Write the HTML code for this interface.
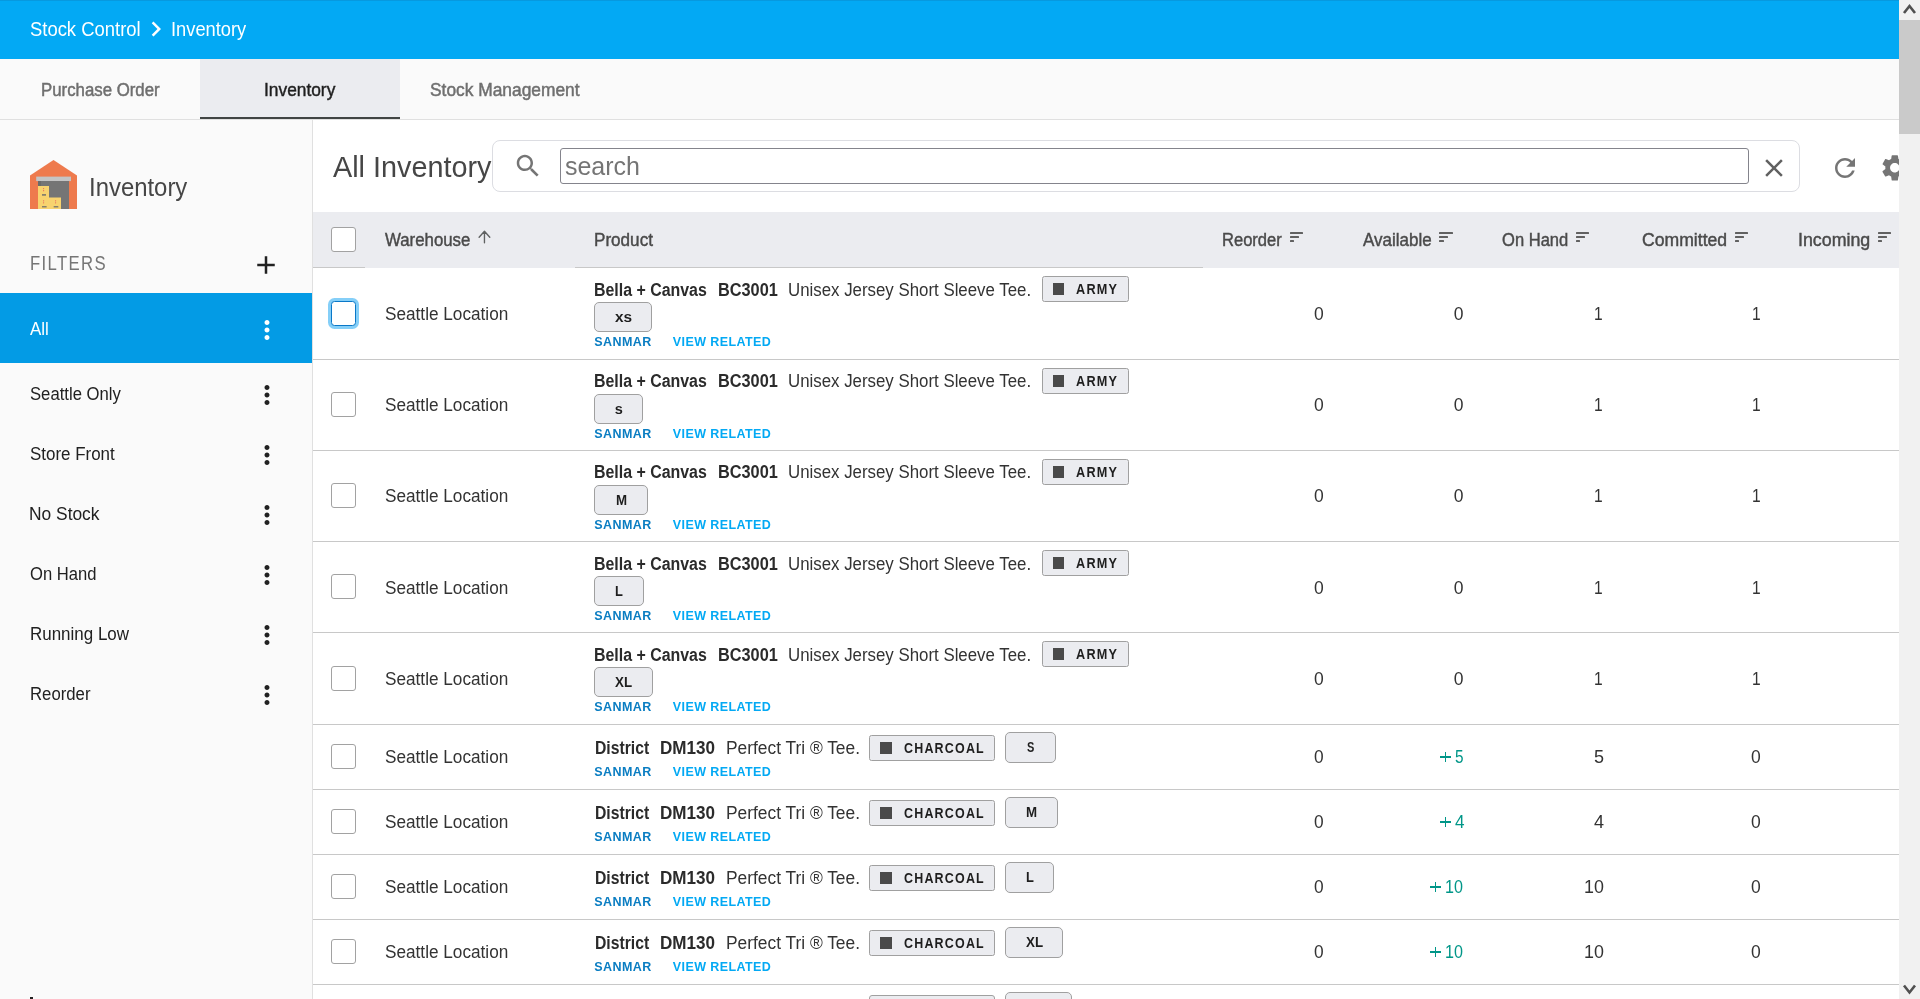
<!DOCTYPE html>
<html><head><meta charset="utf-8"><title>Inventory</title>
<style>
html,body{margin:0;padding:0;width:1920px;height:999px;overflow:hidden;background:#fff}
body{position:relative;font-family:'Liberation Sans', sans-serif}
svg{display:block}
</style></head><body>
<div id="root" style="position:absolute;left:0;top:0;width:1920px;height:999px;will-change:transform">
<div style="position:absolute;left:0px;top:0px;width:1899px;height:59px;background:#03A9F4"></div>
<div style="position:absolute;left:0px;top:0px;width:1899px;height:1px;background:#0A8FD0;opacity:.6"></div>
<svg style="position:absolute;left:141.2px;top:14.4px" width="30" height="30" viewBox="0 0 24 24"><path fill="#fff" d="M10 6L8.59 7.41 13.17 12l-4.58 4.59L10 18l6-6z"/></svg>
<div style="position:absolute;left:0px;top:59px;width:1899px;height:60px;background:#FAFAFA"></div>
<div style="position:absolute;left:200px;top:59px;width:200px;height:58px;background:#EBECF0"></div>
<div style="position:absolute;left:200px;top:117px;width:200px;height:2px;background:#404444"></div>
<div style="position:absolute;left:0px;top:119px;width:1899px;height:1px;background:#E0E0E0"></div>
<div style="position:absolute;left:0px;top:120px;width:312px;height:879px;background:#FAFAFA"></div>
<div style="position:absolute;left:312px;top:120px;width:1px;height:879px;background:#E0E0E0"></div>
<svg style="position:absolute;left:30px;top:160px" width="47" height="49" viewBox="0 0 47 49">
<path fill="#EE7A4D" d="M0 15.4 L23.5 0 L47 15.4 L47 49 L0 49 Z"/>
<rect x="6.2" y="16.6" width="34.8" height="4.5" fill="#C4C4C4"/>
<rect x="8" y="21" width="31" height="28" fill="#757575"/>
<rect x="8" y="26" width="11" height="23" fill="#F8D36F"/>
<rect x="8" y="37.5" width="23" height="11.5" fill="#F8D36F"/>
<rect x="12" y="34.2" width="4" height="1.4" fill="#6B6B6B"/><rect x="8" y="21" width="3" height="5" fill="#6A6A6A"/>
<rect x="12" y="46.2" width="4.6" height="1.2" fill="#6B6B6B"/>
<rect x="23.7" y="46.2" width="4.6" height="1.2" fill="#6B6B6B"/>
<circle cx="13.6" cy="28.6" r=".6" fill="#E86A5A"/><circle cx="13.6" cy="30.7" r=".6" fill="#E86A5A"/>
<circle cx="13.6" cy="40.8" r=".6" fill="#E86A5A"/><circle cx="13.6" cy="42.8" r=".6" fill="#E86A5A"/>
<circle cx="25.6" cy="40.8" r=".6" fill="#E86A5A"/><circle cx="25.6" cy="42.8" r=".6" fill="#E86A5A"/>
</svg>
<svg style="position:absolute;left:251.4px;top:249.6px" width="30" height="30" viewBox="0 0 24 24"><path fill="#212121" d="M19 13h-6v6h-2v-6H5v-2h6V5h2v6h6v2z"/></svg>
<div style="position:absolute;left:0px;top:293px;width:312px;height:70px;background:#039BE5"></div>
<svg style="position:absolute;left:251.9px;top:315px" width="30" height="30" viewBox="0 0 24 24"><path fill="#fff" d="M12 8c1.1 0 2-.9 2-2s-.9-2-2-2-2 .9-2 2 .9 2 2 2zm0 2c-1.1 0-2 .9-2 2s.9 2 2 2 2-.9 2-2-.9-2-2-2zm0 6c-1.1 0-2 .9-2 2s.9 2 2 2 2-.9 2-2-.9-2-2-2z"/></svg>
<svg style="position:absolute;left:251.9px;top:380px" width="30" height="30" viewBox="0 0 24 24"><path fill="#212121" d="M12 8c1.1 0 2-.9 2-2s-.9-2-2-2-2 .9-2 2 .9 2 2 2zm0 2c-1.1 0-2 .9-2 2s.9 2 2 2 2-.9 2-2-.9-2-2-2zm0 6c-1.1 0-2 .9-2 2s.9 2 2 2 2-.9 2-2-.9-2-2-2z"/></svg>
<svg style="position:absolute;left:251.9px;top:440px" width="30" height="30" viewBox="0 0 24 24"><path fill="#212121" d="M12 8c1.1 0 2-.9 2-2s-.9-2-2-2-2 .9-2 2 .9 2 2 2zm0 2c-1.1 0-2 .9-2 2s.9 2 2 2 2-.9 2-2-.9-2-2-2zm0 6c-1.1 0-2 .9-2 2s.9 2 2 2 2-.9 2-2-.9-2-2-2z"/></svg>
<svg style="position:absolute;left:251.9px;top:500px" width="30" height="30" viewBox="0 0 24 24"><path fill="#212121" d="M12 8c1.1 0 2-.9 2-2s-.9-2-2-2-2 .9-2 2 .9 2 2 2zm0 2c-1.1 0-2 .9-2 2s.9 2 2 2 2-.9 2-2-.9-2-2-2zm0 6c-1.1 0-2 .9-2 2s.9 2 2 2 2-.9 2-2-.9-2-2-2z"/></svg>
<svg style="position:absolute;left:251.9px;top:560px" width="30" height="30" viewBox="0 0 24 24"><path fill="#212121" d="M12 8c1.1 0 2-.9 2-2s-.9-2-2-2-2 .9-2 2 .9 2 2 2zm0 2c-1.1 0-2 .9-2 2s.9 2 2 2 2-.9 2-2-.9-2-2-2zm0 6c-1.1 0-2 .9-2 2s.9 2 2 2 2-.9 2-2-.9-2-2-2z"/></svg>
<svg style="position:absolute;left:251.9px;top:620px" width="30" height="30" viewBox="0 0 24 24"><path fill="#212121" d="M12 8c1.1 0 2-.9 2-2s-.9-2-2-2-2 .9-2 2 .9 2 2 2zm0 2c-1.1 0-2 .9-2 2s.9 2 2 2 2-.9 2-2-.9-2-2-2zm0 6c-1.1 0-2 .9-2 2s.9 2 2 2 2-.9 2-2-.9-2-2-2z"/></svg>
<svg style="position:absolute;left:251.9px;top:680px" width="30" height="30" viewBox="0 0 24 24"><path fill="#212121" d="M12 8c1.1 0 2-.9 2-2s-.9-2-2-2-2 .9-2 2 .9 2 2 2zm0 2c-1.1 0-2 .9-2 2s.9 2 2 2 2-.9 2-2-.9-2-2-2zm0 6c-1.1 0-2 .9-2 2s.9 2 2 2 2-.9 2-2-.9-2-2-2z"/></svg>
<div style="position:absolute;left:30px;top:997px;width:3px;height:2px;background:#222"></div>
<div style="position:absolute;left:313px;top:120px;width:1586px;height:879px;background:#fff"></div>
<div style="position:absolute;left:492px;top:140px;width:1308px;height:52px;border:1px solid #DCDDE2;border-radius:8px;box-sizing:border-box;background:#fff"></div>
<svg style="position:absolute;left:512.7px;top:151.2px" width="30" height="30" viewBox="0 0 24 24"><path fill="#757575" d="M15.5 14h-.79l-.28-.27C15.41 12.59 16 11.11 16 9.5 16 5.91 13.09 3 9.5 3S3 5.91 3 9.5 5.91 16 9.5 16c1.61 0 3.09-.59 4.23-1.57l.27.28v.79l5 4.99L20.49 19l-4.99-5zm-6 0C7.01 14 5 11.99 5 9.5S7.01 5 9.5 5 14 7.01 14 9.5 11.99 14 9.5 14z"/></svg>
<div style="position:absolute;left:560px;top:148px;width:1189px;height:36px;border:1.3px solid #84848C;border-radius:3px;box-sizing:border-box;background:#fff"></div>
<svg style="position:absolute;left:1758.75px;top:152.5px" width="30" height="30" viewBox="0 0 24 24"><path fill="#616161" d="M19 6.41L17.59 5 12 10.59 6.41 5 5 6.41 10.59 12 5 17.59 6.41 19 12 13.41 17.59 19 19 17.59 13.41 12z"/></svg>
<svg style="position:absolute;left:1829.9px;top:152.9px" width="30" height="30" viewBox="0 0 24 24"><path fill="#757575" d="M17.65 6.35C16.2 4.9 14.21 4 12 4c-4.42 0-7.99 3.58-7.99 8s3.57 8 7.99 8c3.73 0 6.84-2.55 7.73-6h-2.08c-.82 2.33-3.04 4-5.65 4-3.31 0-6-2.69-6-6s2.69-6 6-6c1.66 0 3.14.69 4.22 1.78L13 11h7V4l-2.35 2.35z"/></svg>
<svg style="position:absolute;left:1878.8px;top:152.0px" width="31.6" height="31.6" viewBox="0 0 24 24"><path fill="#757575" d="M19.14 12.94c.04-.3.06-.61.06-.94 0-.32-.02-.64-.07-.94l2.03-1.58c.18-.14.23-.41.12-.61l-1.92-3.32c-.12-.22-.37-.29-.59-.22l-2.39.96c-.5-.38-1.03-.7-1.62-.94l-.36-2.54c-.04-.24-.24-.41-.48-.41h-3.84c-.24 0-.43.17-.47.41l-.36 2.54c-.59.24-1.13.57-1.62.94l-2.39-.96c-.22-.08-.47 0-.59.22L2.74 8.87c-.12.21-.08.47.12.61l2.03 1.58c-.05.3-.09.63-.09.94s.02.64.07.94l-2.03 1.58c-.18.14-.23.41-.12.61l1.92 3.32c.12.22.37.29.59.22l2.39-.96c.5.38 1.03.7 1.62.94l.36 2.54c.05.24.24.41.48.41h3.84c.24 0 .44-.17.47-.41l.36-2.54c.59-.24 1.13-.56 1.62-.94l2.39.96c.22.08.47 0 .59-.22l1.92-3.32c.12-.22.07-.47-.12-.61l-2.01-1.58zM12 15.6c-1.98 0-3.6-1.62-3.6-3.6s1.62-3.6 3.6-3.6 3.6 1.62 3.6 3.6-1.62 3.6-3.6 3.6z"/></svg>
<div style="position:absolute;left:313px;top:212px;width:1586px;height:55px;background:#EBECF0"></div>
<div style="position:absolute;left:313px;top:267px;width:52px;height:1px;background:#C8C8C8"></div>
<div style="position:absolute;left:575px;top:267px;width:628px;height:1px;background:#C8C8C8"></div>
<div style="position:absolute;left:365px;top:267px;width:210px;height:1px;background:#EBECF0"></div>
<div style="position:absolute;left:1203px;top:267px;width:696px;height:1px;background:#EBECF0"></div>
<div style="position:absolute;left:331px;top:227px;width:25px;height:25px;border:1.25px solid #A2A2A2;border-radius:3px;box-sizing:border-box;background:#fff"></div>
<svg style="position:absolute;left:470px;top:225px" width="30" height="25" viewBox="0 0 30 25"><path d="M9.1 12.3 L14.46 6.3 L19.8 12.3 M14.46 6.6 V17.7" fill="none" stroke="#5f6161" stroke-width="1.35" stroke-linecap="round" stroke-linejoin="round"/></svg>
<div style="position:absolute;left:1289.85px;top:232.2px;width:13.25px;height:1.700000000000017px;background:#616161;border-radius:.5px"></div>
<div style="position:absolute;left:1289.85px;top:236.1px;width:9.049999999999955px;height:1.700000000000017px;background:#616161;border-radius:.5px"></div>
<div style="position:absolute;left:1289.85px;top:240.0px;width:4.349999999999909px;height:1.8000000000000114px;background:#616161;border-radius:.5px"></div>
<div style="position:absolute;left:1439.35px;top:232.2px;width:13.25px;height:1.700000000000017px;background:#616161;border-radius:.5px"></div>
<div style="position:absolute;left:1439.35px;top:236.1px;width:9.049999999999955px;height:1.700000000000017px;background:#616161;border-radius:.5px"></div>
<div style="position:absolute;left:1439.35px;top:240.0px;width:4.349999999999909px;height:1.8000000000000114px;background:#616161;border-radius:.5px"></div>
<div style="position:absolute;left:1575.6px;top:232.2px;width:13.25px;height:1.700000000000017px;background:#616161;border-radius:.5px"></div>
<div style="position:absolute;left:1575.6px;top:236.1px;width:9.049999999999955px;height:1.700000000000017px;background:#616161;border-radius:.5px"></div>
<div style="position:absolute;left:1575.6px;top:240.0px;width:4.349999999999909px;height:1.8000000000000114px;background:#616161;border-radius:.5px"></div>
<div style="position:absolute;left:1735.1px;top:232.2px;width:13.25px;height:1.700000000000017px;background:#616161;border-radius:.5px"></div>
<div style="position:absolute;left:1735.1px;top:236.1px;width:9.049999999999955px;height:1.700000000000017px;background:#616161;border-radius:.5px"></div>
<div style="position:absolute;left:1735.1px;top:240.0px;width:4.349999999999909px;height:1.8000000000000114px;background:#616161;border-radius:.5px"></div>
<div style="position:absolute;left:1878.1px;top:232.2px;width:13.25px;height:1.700000000000017px;background:#616161;border-radius:.5px"></div>
<div style="position:absolute;left:1878.1px;top:236.1px;width:9.049999999999955px;height:1.700000000000017px;background:#616161;border-radius:.5px"></div>
<div style="position:absolute;left:1878.1px;top:240.0px;width:4.349999999999909px;height:1.8000000000000114px;background:#616161;border-radius:.5px"></div>
<div style="position:absolute;left:313px;top:359px;width:1586px;height:1px;background:#C8C8C8"></div>
<div style="position:absolute;left:331px;top:301px;width:25px;height:25px;border:1.6px solid #0A78C8;border-radius:3.5px;box-sizing:border-box;background:#fff;box-shadow:0 0 0 3px #85CFF8"></div>
<div style="position:absolute;left:1042px;top:276.25px;width:86.5px;height:25.5px;background:#EBECF0;border:1px solid #A0A0A0;border-radius:2.5px;box-sizing:border-box"></div>
<div style="position:absolute;left:1052.6px;top:283.25px;width:11.700000000000045px;height:12.0px;background:#4A4A4A"></div>
<div style="position:absolute;left:594.2px;top:302.3px;width:58.299999999999955px;height:30.19999999999999px;background:#EBECF0;border:1px solid #A0A0A0;border-radius:5px;box-sizing:border-box"></div>
<div style="position:absolute;left:313px;top:450px;width:1586px;height:1px;background:#C8C8C8"></div>
<div style="position:absolute;left:331px;top:392px;width:25px;height:25px;border:1.25px solid #A2A2A2;border-radius:3px;box-sizing:border-box;background:#fff"></div>
<div style="position:absolute;left:1042px;top:368.25px;width:86.5px;height:25.5px;background:#EBECF0;border:1px solid #A0A0A0;border-radius:2.5px;box-sizing:border-box"></div>
<div style="position:absolute;left:1052.6px;top:375.25px;width:11.700000000000045px;height:12.0px;background:#4A4A4A"></div>
<div style="position:absolute;left:594.2px;top:394.3px;width:49.299999999999955px;height:30.19999999999999px;background:#EBECF0;border:1px solid #A0A0A0;border-radius:5px;box-sizing:border-box"></div>
<div style="position:absolute;left:313px;top:541px;width:1586px;height:1px;background:#C8C8C8"></div>
<div style="position:absolute;left:331px;top:483px;width:25px;height:25px;border:1.25px solid #A2A2A2;border-radius:3px;box-sizing:border-box;background:#fff"></div>
<div style="position:absolute;left:1042px;top:459.25px;width:86.5px;height:25.5px;background:#EBECF0;border:1px solid #A0A0A0;border-radius:2.5px;box-sizing:border-box"></div>
<div style="position:absolute;left:1052.6px;top:466.25px;width:11.700000000000045px;height:12.0px;background:#4A4A4A"></div>
<div style="position:absolute;left:594.2px;top:485.3px;width:53.69999999999993px;height:30.19999999999999px;background:#EBECF0;border:1px solid #A0A0A0;border-radius:5px;box-sizing:border-box"></div>
<div style="position:absolute;left:313px;top:632px;width:1586px;height:1px;background:#C8C8C8"></div>
<div style="position:absolute;left:331px;top:574px;width:25px;height:25px;border:1.25px solid #A2A2A2;border-radius:3px;box-sizing:border-box;background:#fff"></div>
<div style="position:absolute;left:1042px;top:550.25px;width:86.5px;height:25.5px;background:#EBECF0;border:1px solid #A0A0A0;border-radius:2.5px;box-sizing:border-box"></div>
<div style="position:absolute;left:1052.6px;top:557.25px;width:11.700000000000045px;height:12.0px;background:#4A4A4A"></div>
<div style="position:absolute;left:594.2px;top:576.3px;width:49.39999999999998px;height:30.200000000000045px;background:#EBECF0;border:1px solid #A0A0A0;border-radius:5px;box-sizing:border-box"></div>
<div style="position:absolute;left:313px;top:724px;width:1586px;height:1px;background:#C8C8C8"></div>
<div style="position:absolute;left:331px;top:666px;width:25px;height:25px;border:1.25px solid #A2A2A2;border-radius:3px;box-sizing:border-box;background:#fff"></div>
<div style="position:absolute;left:1042px;top:641.25px;width:86.5px;height:25.5px;background:#EBECF0;border:1px solid #A0A0A0;border-radius:2.5px;box-sizing:border-box"></div>
<div style="position:absolute;left:1052.6px;top:648.25px;width:11.700000000000045px;height:12.0px;background:#4A4A4A"></div>
<div style="position:absolute;left:594.2px;top:667.3px;width:58.39999999999998px;height:30.200000000000045px;background:#EBECF0;border:1px solid #A0A0A0;border-radius:5px;box-sizing:border-box"></div>
<div style="position:absolute;left:313px;top:789px;width:1586px;height:1px;background:#C8C8C8"></div>
<div style="position:absolute;left:331px;top:744px;width:25px;height:25px;border:1.25px solid #A2A2A2;border-radius:3px;box-sizing:border-box;background:#fff"></div>
<div style="position:absolute;left:869.3px;top:735.1px;width:125.5px;height:25.5px;background:#EBECF0;border:1px solid #A0A0A0;border-radius:2.5px;box-sizing:border-box"></div>
<div style="position:absolute;left:879.9px;top:742.1px;width:11.699999999999932px;height:12.0px;background:#4A4A4A"></div>
<div style="position:absolute;left:1005.3px;top:732.4px;width:50.5px;height:30.200000000000045px;background:#EBECF0;border:1px solid #A0A0A0;border-radius:5px;box-sizing:border-box"></div>
<div style="position:absolute;left:1440px;top:756.1px;width:10.900000000000091px;height:1.7999999999999545px;background:#009688"></div>
<div style="position:absolute;left:1444.55px;top:751.9px;width:1.800000000000182px;height:10.0px;background:#009688"></div>
<div style="position:absolute;left:313px;top:854px;width:1586px;height:1px;background:#C8C8C8"></div>
<div style="position:absolute;left:331px;top:809px;width:25px;height:25px;border:1.25px solid #A2A2A2;border-radius:3px;box-sizing:border-box;background:#fff"></div>
<div style="position:absolute;left:869.3px;top:800.1px;width:125.5px;height:25.5px;background:#EBECF0;border:1px solid #A0A0A0;border-radius:2.5px;box-sizing:border-box"></div>
<div style="position:absolute;left:879.9px;top:807.1px;width:11.699999999999932px;height:12.0px;background:#4A4A4A"></div>
<div style="position:absolute;left:1005.3px;top:797.4px;width:53.200000000000045px;height:30.200000000000045px;background:#EBECF0;border:1px solid #A0A0A0;border-radius:5px;box-sizing:border-box"></div>
<div style="position:absolute;left:1440px;top:821.1px;width:10.900000000000091px;height:1.7999999999999545px;background:#009688"></div>
<div style="position:absolute;left:1444.55px;top:816.9px;width:1.800000000000182px;height:10.0px;background:#009688"></div>
<div style="position:absolute;left:313px;top:919px;width:1586px;height:1px;background:#C8C8C8"></div>
<div style="position:absolute;left:331px;top:874px;width:25px;height:25px;border:1.25px solid #A2A2A2;border-radius:3px;box-sizing:border-box;background:#fff"></div>
<div style="position:absolute;left:869.3px;top:865.1px;width:125.5px;height:25.5px;background:#EBECF0;border:1px solid #A0A0A0;border-radius:2.5px;box-sizing:border-box"></div>
<div style="position:absolute;left:879.9px;top:872.1px;width:11.699999999999932px;height:12.0px;background:#4A4A4A"></div>
<div style="position:absolute;left:1005.3px;top:862.4px;width:49.0px;height:30.200000000000045px;background:#EBECF0;border:1px solid #A0A0A0;border-radius:5px;box-sizing:border-box"></div>
<div style="position:absolute;left:1430.3px;top:886.1px;width:10.600000000000136px;height:1.7999999999999545px;background:#009688"></div>
<div style="position:absolute;left:1434.6999999999998px;top:881.9px;width:1.800000000000182px;height:10.0px;background:#009688"></div>
<div style="position:absolute;left:313px;top:984px;width:1586px;height:1px;background:#C8C8C8"></div>
<div style="position:absolute;left:331px;top:939px;width:25px;height:25px;border:1.25px solid #A2A2A2;border-radius:3px;box-sizing:border-box;background:#fff"></div>
<div style="position:absolute;left:869.3px;top:930.1px;width:125.5px;height:25.5px;background:#EBECF0;border:1px solid #A0A0A0;border-radius:2.5px;box-sizing:border-box"></div>
<div style="position:absolute;left:879.9px;top:937.1px;width:11.699999999999932px;height:12.0px;background:#4A4A4A"></div>
<div style="position:absolute;left:1005.3px;top:927.4px;width:58.200000000000045px;height:30.200000000000045px;background:#EBECF0;border:1px solid #A0A0A0;border-radius:5px;box-sizing:border-box"></div>
<div style="position:absolute;left:1430.3px;top:951.1px;width:10.600000000000136px;height:1.7999999999999545px;background:#009688"></div>
<div style="position:absolute;left:1434.6999999999998px;top:946.9px;width:1.800000000000182px;height:10.0px;background:#009688"></div>
<div style="position:absolute;left:869.4px;top:995.25px;width:125.35000000000002px;height:14.75px;background:#EBECF0;border:1px solid #A0A0A0;border-radius:3px;box-sizing:border-box"></div>
<div style="position:absolute;left:1005.25px;top:992.25px;width:66.65000000000009px;height:22.75px;background:#EBECF0;border:1px solid #A0A0A0;border-radius:5px;box-sizing:border-box"></div>
<div style="position:absolute;left:1899px;top:0px;width:21px;height:999px;background:#F1F1F1"></div>
<div style="position:absolute;left:1899px;top:20px;width:21px;height:114.4px;background:#CACACA"></div>
<svg style="position:absolute;left:1899px;top:0" width="21" height="20"><path d="M5 13 L10.5 6 L16 13" fill="none" stroke="#505050" stroke-width="2.6"/></svg>
<svg style="position:absolute;left:1899px;top:979" width="21" height="20"><path d="M5 6.5 L10.5 13.5 L16 6.5" fill="none" stroke="#505050" stroke-width="2.6"/></svg>
<div style="position:absolute;left:29.68px;top:19.25px;font-size:20px;line-height:20px;font-weight:400;color:#fff;white-space:pre;transform:scaleX(0.9214);transform-origin:0 0;">Stock Control</div>
<div style="position:absolute;left:170.99px;top:19.25px;font-size:20px;line-height:20px;font-weight:400;color:#fff;white-space:pre;transform:scaleX(0.9146);transform-origin:0 0;">Inventory</div>
<div style="position:absolute;left:40.70px;top:81.00px;font-size:18.75px;line-height:18.75px;font-weight:400;color:#6f6f6f;white-space:pre;-webkit-text-stroke:0.5px #6f6f6f;transform:scaleX(0.8962);transform-origin:0 0;">Purchase Order</div>
<div style="position:absolute;left:263.68px;top:81.00px;font-size:18.75px;line-height:18.75px;font-weight:400;color:#1f1f1f;white-space:pre;-webkit-text-stroke:0.45px #1f1f1f;transform:scaleX(0.9247);transform-origin:0 0;">Inventory</div>
<div style="position:absolute;left:430.20px;top:81.00px;font-size:18.75px;line-height:18.75px;font-weight:400;color:#6f6f6f;white-space:pre;-webkit-text-stroke:0.5px #6f6f6f;transform:scaleX(0.9259);transform-origin:0 0;">Stock Management</div>
<div style="position:absolute;left:88.74px;top:174.90px;font-size:25px;line-height:25px;font-weight:400;color:#464646;white-space:pre;transform:scaleX(0.9559);transform-origin:0 0;">Inventory</div>
<div style="position:absolute;left:29.84px;top:253.90px;font-size:19.5px;line-height:19.5px;font-weight:400;color:#757575;white-space:pre;letter-spacing:1.600px;transform:scaleX(0.8563);transform-origin:0 0;">FILTERS</div>
<div style="position:absolute;left:30.10px;top:320.00px;font-size:18.75px;line-height:18.75px;font-weight:400;color:#fff;white-space:pre;transform:scaleX(0.9048);transform-origin:0 0;">All</div>
<div style="position:absolute;left:29.51px;top:385.00px;font-size:18.75px;line-height:18.75px;font-weight:400;color:#212121;white-space:pre;transform:scaleX(0.8892);transform-origin:0 0;">Seattle Only</div>
<div style="position:absolute;left:29.50px;top:445.00px;font-size:18.75px;line-height:18.75px;font-weight:400;color:#212121;white-space:pre;transform:scaleX(0.9032);transform-origin:0 0;">Store Front</div>
<div style="position:absolute;left:29.47px;top:505.00px;font-size:18.75px;line-height:18.75px;font-weight:400;color:#212121;white-space:pre;transform:scaleX(0.9267);transform-origin:0 0;">No Stock</div>
<div style="position:absolute;left:30.40px;top:565.00px;font-size:18.75px;line-height:18.75px;font-weight:400;color:#212121;white-space:pre;transform:scaleX(0.8853);transform-origin:0 0;">On Hand</div>
<div style="position:absolute;left:29.50px;top:625.00px;font-size:18.75px;line-height:18.75px;font-weight:400;color:#212121;white-space:pre;transform:scaleX(0.9046);transform-origin:0 0;">Running Low</div>
<div style="position:absolute;left:29.51px;top:685.00px;font-size:18.75px;line-height:18.75px;font-weight:400;color:#212121;white-space:pre;transform:scaleX(0.8925);transform-origin:0 0;">Reorder</div>
<div style="position:absolute;left:333.00px;top:151.90px;font-size:30px;line-height:30px;font-weight:400;color:#464646;white-space:pre;transform:scaleX(0.9600);transform-origin:0 0;">All Inventory</div>
<div style="position:absolute;left:564.90px;top:154.00px;font-size:25px;line-height:25px;font-weight:400;color:#757575;white-space:pre;">search</div>
<div style="position:absolute;left:385.30px;top:230.70px;font-size:18.75px;line-height:18.75px;font-weight:400;color:#4a4a4a;white-space:pre;-webkit-text-stroke:0.45px #4a4a4a;transform:scaleX(0.8969);transform-origin:0 0;">Warehouse</div>
<div style="position:absolute;left:594.30px;top:230.70px;font-size:18.75px;line-height:18.75px;font-weight:400;color:#4a4a4a;white-space:pre;-webkit-text-stroke:0.45px #4a4a4a;transform:scaleX(0.9121);transform-origin:0 0;">Product</div>
<div style="position:absolute;left:1222.40px;top:230.70px;font-size:18.75px;line-height:18.75px;font-weight:400;color:#4a4a4a;white-space:pre;-webkit-text-stroke:0.45px #4a4a4a;transform:scaleX(0.8824);transform-origin:0 0;">Reorder</div>
<div style="position:absolute;left:1363.11px;top:230.70px;font-size:18.75px;line-height:18.75px;font-weight:400;color:#4a4a4a;white-space:pre;-webkit-text-stroke:0.45px #4a4a4a;transform:scaleX(0.9065);transform-origin:0 0;">Available</div>
<div style="position:absolute;left:1502.00px;top:230.70px;font-size:18.75px;line-height:18.75px;font-weight:400;color:#4a4a4a;white-space:pre;-webkit-text-stroke:0.45px #4a4a4a;transform:scaleX(0.8833);transform-origin:0 0;">On Hand</div>
<div style="position:absolute;left:1642.00px;top:230.70px;font-size:18.75px;line-height:18.75px;font-weight:400;color:#4a4a4a;white-space:pre;-webkit-text-stroke:0.45px #4a4a4a;transform:scaleX(0.9396);transform-origin:0 0;">Committed</div>
<div style="position:absolute;left:1798.30px;top:230.70px;font-size:18.75px;line-height:18.75px;font-weight:400;color:#4a4a4a;white-space:pre;-webkit-text-stroke:0.45px #4a4a4a;transform:scaleX(0.9500);transform-origin:0 0;">Incoming</div>
<div style="position:absolute;left:384.50px;top:305.90px;font-size:17.5px;line-height:17.5px;font-weight:400;color:#333333;white-space:pre;transform:scaleX(0.9824);transform-origin:0 0;">Seattle Location</div>
<div style="position:absolute;left:594.40px;top:281.80px;font-size:17.5px;line-height:17.5px;font-weight:700;color:#2b2b2b;white-space:pre;transform:scaleX(0.9097);transform-origin:0 0;">Bella + Canvas</div>
<div style="position:absolute;left:717.90px;top:281.80px;font-size:17.5px;line-height:17.5px;font-weight:700;color:#2b2b2b;white-space:pre;transform:scaleX(0.9313);transform-origin:0 0;">BC3001</div>
<div style="position:absolute;left:788.44px;top:281.80px;font-size:17.5px;line-height:17.5px;font-weight:400;color:#333333;white-space:pre;transform:scaleX(0.9625);transform-origin:0 0;">Unisex Jersey Short Sleeve Tee.</div>
<div style="position:absolute;left:1075.80px;top:281.75px;font-size:14.5px;line-height:14.5px;font-weight:700;color:#1e1e1e;white-space:pre;letter-spacing:1.400px;transform:scaleX(0.8745);transform-origin:0 0;">ARMY</div>
<div style="position:absolute;left:614.85px;top:309.90px;font-size:14.5px;line-height:14.5px;font-weight:700;color:#1e1e1e;white-space:pre;transform:scaleX(1.0625);transform-origin:0 0;">xs</div>
<div style="position:absolute;left:594.20px;top:335.80px;font-size:12.5px;line-height:12.5px;font-weight:700;color:#0A7DC2;white-space:pre;letter-spacing:0.460px;">SANMAR</div>
<div style="position:absolute;left:672.80px;top:335.80px;font-size:12.5px;line-height:12.5px;font-weight:700;color:#03A9F4;white-space:pre;letter-spacing:0.405px;">VIEW RELATED</div>
<div style="position:absolute;left:1314.00px;top:305.90px;font-size:17.5px;line-height:17.5px;font-weight:400;color:#333333;white-space:pre;">0</div>
<div style="position:absolute;left:1453.70px;top:305.90px;font-size:17.5px;line-height:17.5px;font-weight:400;color:#333333;white-space:pre;">0</div>
<div style="position:absolute;left:1593.91px;top:305.90px;font-size:17.5px;line-height:17.5px;font-weight:400;color:#333333;white-space:pre;transform:scaleX(0.8889);transform-origin:0 0;">1</div>
<div style="position:absolute;left:1751.71px;top:305.90px;font-size:17.5px;line-height:17.5px;font-weight:400;color:#333333;white-space:pre;transform:scaleX(0.8889);transform-origin:0 0;">1</div>
<div style="position:absolute;left:384.50px;top:396.90px;font-size:17.5px;line-height:17.5px;font-weight:400;color:#333333;white-space:pre;transform:scaleX(0.9824);transform-origin:0 0;">Seattle Location</div>
<div style="position:absolute;left:594.40px;top:372.80px;font-size:17.5px;line-height:17.5px;font-weight:700;color:#2b2b2b;white-space:pre;transform:scaleX(0.9097);transform-origin:0 0;">Bella + Canvas</div>
<div style="position:absolute;left:717.90px;top:372.80px;font-size:17.5px;line-height:17.5px;font-weight:700;color:#2b2b2b;white-space:pre;transform:scaleX(0.9313);transform-origin:0 0;">BC3001</div>
<div style="position:absolute;left:788.44px;top:372.80px;font-size:17.5px;line-height:17.5px;font-weight:400;color:#333333;white-space:pre;transform:scaleX(0.9625);transform-origin:0 0;">Unisex Jersey Short Sleeve Tee.</div>
<div style="position:absolute;left:1075.80px;top:373.75px;font-size:14.5px;line-height:14.5px;font-weight:700;color:#1e1e1e;white-space:pre;letter-spacing:1.400px;transform:scaleX(0.8745);transform-origin:0 0;">ARMY</div>
<div style="position:absolute;left:614.85px;top:401.90px;font-size:14.5px;line-height:14.5px;font-weight:700;color:#1e1e1e;white-space:pre;">s</div>
<div style="position:absolute;left:594.20px;top:427.80px;font-size:12.5px;line-height:12.5px;font-weight:700;color:#0A7DC2;white-space:pre;letter-spacing:0.460px;">SANMAR</div>
<div style="position:absolute;left:672.80px;top:427.80px;font-size:12.5px;line-height:12.5px;font-weight:700;color:#03A9F4;white-space:pre;letter-spacing:0.405px;">VIEW RELATED</div>
<div style="position:absolute;left:1314.00px;top:396.90px;font-size:17.5px;line-height:17.5px;font-weight:400;color:#333333;white-space:pre;">0</div>
<div style="position:absolute;left:1453.70px;top:396.90px;font-size:17.5px;line-height:17.5px;font-weight:400;color:#333333;white-space:pre;">0</div>
<div style="position:absolute;left:1593.91px;top:396.90px;font-size:17.5px;line-height:17.5px;font-weight:400;color:#333333;white-space:pre;transform:scaleX(0.8889);transform-origin:0 0;">1</div>
<div style="position:absolute;left:1751.71px;top:396.90px;font-size:17.5px;line-height:17.5px;font-weight:400;color:#333333;white-space:pre;transform:scaleX(0.8889);transform-origin:0 0;">1</div>
<div style="position:absolute;left:384.50px;top:487.90px;font-size:17.5px;line-height:17.5px;font-weight:400;color:#333333;white-space:pre;transform:scaleX(0.9824);transform-origin:0 0;">Seattle Location</div>
<div style="position:absolute;left:594.40px;top:463.80px;font-size:17.5px;line-height:17.5px;font-weight:700;color:#2b2b2b;white-space:pre;transform:scaleX(0.9097);transform-origin:0 0;">Bella + Canvas</div>
<div style="position:absolute;left:717.90px;top:463.80px;font-size:17.5px;line-height:17.5px;font-weight:700;color:#2b2b2b;white-space:pre;transform:scaleX(0.9313);transform-origin:0 0;">BC3001</div>
<div style="position:absolute;left:788.44px;top:463.80px;font-size:17.5px;line-height:17.5px;font-weight:400;color:#333333;white-space:pre;transform:scaleX(0.9625);transform-origin:0 0;">Unisex Jersey Short Sleeve Tee.</div>
<div style="position:absolute;left:1075.80px;top:464.75px;font-size:14.5px;line-height:14.5px;font-weight:700;color:#1e1e1e;white-space:pre;letter-spacing:1.400px;transform:scaleX(0.8745);transform-origin:0 0;">ARMY</div>
<div style="position:absolute;left:615.55px;top:492.90px;font-size:14.5px;line-height:14.5px;font-weight:700;color:#1e1e1e;white-space:pre;transform:scaleX(0.9167);transform-origin:0 0;">M</div>
<div style="position:absolute;left:594.20px;top:518.80px;font-size:12.5px;line-height:12.5px;font-weight:700;color:#0A7DC2;white-space:pre;letter-spacing:0.460px;">SANMAR</div>
<div style="position:absolute;left:672.80px;top:518.80px;font-size:12.5px;line-height:12.5px;font-weight:700;color:#03A9F4;white-space:pre;letter-spacing:0.405px;">VIEW RELATED</div>
<div style="position:absolute;left:1314.00px;top:487.90px;font-size:17.5px;line-height:17.5px;font-weight:400;color:#333333;white-space:pre;">0</div>
<div style="position:absolute;left:1453.70px;top:487.90px;font-size:17.5px;line-height:17.5px;font-weight:400;color:#333333;white-space:pre;">0</div>
<div style="position:absolute;left:1593.91px;top:487.90px;font-size:17.5px;line-height:17.5px;font-weight:400;color:#333333;white-space:pre;transform:scaleX(0.8889);transform-origin:0 0;">1</div>
<div style="position:absolute;left:1751.71px;top:487.90px;font-size:17.5px;line-height:17.5px;font-weight:400;color:#333333;white-space:pre;transform:scaleX(0.8889);transform-origin:0 0;">1</div>
<div style="position:absolute;left:384.50px;top:579.90px;font-size:17.5px;line-height:17.5px;font-weight:400;color:#333333;white-space:pre;transform:scaleX(0.9824);transform-origin:0 0;">Seattle Location</div>
<div style="position:absolute;left:594.40px;top:555.80px;font-size:17.5px;line-height:17.5px;font-weight:700;color:#2b2b2b;white-space:pre;transform:scaleX(0.9097);transform-origin:0 0;">Bella + Canvas</div>
<div style="position:absolute;left:717.90px;top:555.80px;font-size:17.5px;line-height:17.5px;font-weight:700;color:#2b2b2b;white-space:pre;transform:scaleX(0.9313);transform-origin:0 0;">BC3001</div>
<div style="position:absolute;left:788.44px;top:555.80px;font-size:17.5px;line-height:17.5px;font-weight:400;color:#333333;white-space:pre;transform:scaleX(0.9625);transform-origin:0 0;">Unisex Jersey Short Sleeve Tee.</div>
<div style="position:absolute;left:1075.80px;top:555.75px;font-size:14.5px;line-height:14.5px;font-weight:700;color:#1e1e1e;white-space:pre;letter-spacing:1.400px;transform:scaleX(0.8745);transform-origin:0 0;">ARMY</div>
<div style="position:absolute;left:614.90px;top:583.90px;font-size:14.5px;line-height:14.5px;font-weight:700;color:#1e1e1e;white-space:pre;transform:scaleX(0.8889);transform-origin:0 0;">L</div>
<div style="position:absolute;left:594.20px;top:609.80px;font-size:12.5px;line-height:12.5px;font-weight:700;color:#0A7DC2;white-space:pre;letter-spacing:0.460px;">SANMAR</div>
<div style="position:absolute;left:672.80px;top:609.80px;font-size:12.5px;line-height:12.5px;font-weight:700;color:#03A9F4;white-space:pre;letter-spacing:0.405px;">VIEW RELATED</div>
<div style="position:absolute;left:1314.00px;top:579.90px;font-size:17.5px;line-height:17.5px;font-weight:400;color:#333333;white-space:pre;">0</div>
<div style="position:absolute;left:1453.70px;top:579.90px;font-size:17.5px;line-height:17.5px;font-weight:400;color:#333333;white-space:pre;">0</div>
<div style="position:absolute;left:1593.91px;top:579.90px;font-size:17.5px;line-height:17.5px;font-weight:400;color:#333333;white-space:pre;transform:scaleX(0.8889);transform-origin:0 0;">1</div>
<div style="position:absolute;left:1751.71px;top:579.90px;font-size:17.5px;line-height:17.5px;font-weight:400;color:#333333;white-space:pre;transform:scaleX(0.8889);transform-origin:0 0;">1</div>
<div style="position:absolute;left:384.50px;top:670.90px;font-size:17.5px;line-height:17.5px;font-weight:400;color:#333333;white-space:pre;transform:scaleX(0.9824);transform-origin:0 0;">Seattle Location</div>
<div style="position:absolute;left:594.40px;top:646.80px;font-size:17.5px;line-height:17.5px;font-weight:700;color:#2b2b2b;white-space:pre;transform:scaleX(0.9097);transform-origin:0 0;">Bella + Canvas</div>
<div style="position:absolute;left:717.90px;top:646.80px;font-size:17.5px;line-height:17.5px;font-weight:700;color:#2b2b2b;white-space:pre;transform:scaleX(0.9313);transform-origin:0 0;">BC3001</div>
<div style="position:absolute;left:788.44px;top:646.80px;font-size:17.5px;line-height:17.5px;font-weight:400;color:#333333;white-space:pre;transform:scaleX(0.9625);transform-origin:0 0;">Unisex Jersey Short Sleeve Tee.</div>
<div style="position:absolute;left:1075.80px;top:646.75px;font-size:14.5px;line-height:14.5px;font-weight:700;color:#1e1e1e;white-space:pre;letter-spacing:1.400px;transform:scaleX(0.8745);transform-origin:0 0;">ARMY</div>
<div style="position:absolute;left:614.65px;top:674.90px;font-size:14.5px;line-height:14.5px;font-weight:700;color:#1e1e1e;white-space:pre;transform:scaleX(0.9211);transform-origin:0 0;">XL</div>
<div style="position:absolute;left:594.20px;top:700.80px;font-size:12.5px;line-height:12.5px;font-weight:700;color:#0A7DC2;white-space:pre;letter-spacing:0.460px;">SANMAR</div>
<div style="position:absolute;left:672.80px;top:700.80px;font-size:12.5px;line-height:12.5px;font-weight:700;color:#03A9F4;white-space:pre;letter-spacing:0.405px;">VIEW RELATED</div>
<div style="position:absolute;left:1314.00px;top:670.90px;font-size:17.5px;line-height:17.5px;font-weight:400;color:#333333;white-space:pre;">0</div>
<div style="position:absolute;left:1453.70px;top:670.90px;font-size:17.5px;line-height:17.5px;font-weight:400;color:#333333;white-space:pre;">0</div>
<div style="position:absolute;left:1593.91px;top:670.90px;font-size:17.5px;line-height:17.5px;font-weight:400;color:#333333;white-space:pre;transform:scaleX(0.8889);transform-origin:0 0;">1</div>
<div style="position:absolute;left:1751.71px;top:670.90px;font-size:17.5px;line-height:17.5px;font-weight:400;color:#333333;white-space:pre;transform:scaleX(0.8889);transform-origin:0 0;">1</div>
<div style="position:absolute;left:384.50px;top:749.10px;font-size:17.5px;line-height:17.5px;font-weight:400;color:#333333;white-space:pre;transform:scaleX(0.9824);transform-origin:0 0;">Seattle Location</div>
<div style="position:absolute;left:594.50px;top:740.10px;font-size:17.5px;line-height:17.5px;font-weight:700;color:#2b2b2b;white-space:pre;transform:scaleX(0.8984);transform-origin:0 0;">District</div>
<div style="position:absolute;left:660.40px;top:740.10px;font-size:17.5px;line-height:17.5px;font-weight:700;color:#2b2b2b;white-space:pre;transform:scaleX(0.9754);transform-origin:0 0;">DM130</div>
<div style="position:absolute;left:725.61px;top:740.10px;font-size:17.5px;line-height:17.5px;font-weight:400;color:#333333;white-space:pre;transform:scaleX(0.9917);transform-origin:0 0;">Perfect Tri ® Tee.</div>
<div style="position:absolute;left:903.50px;top:740.90px;font-size:14.5px;line-height:14.5px;font-weight:700;color:#1e1e1e;white-space:pre;letter-spacing:1.400px;transform:scaleX(0.8591);transform-origin:0 0;">CHARCOAL</div>
<div style="position:absolute;left:1026.75px;top:739.80px;font-size:14.5px;line-height:14.5px;font-weight:700;color:#1e1e1e;white-space:pre;transform:scaleX(0.7600);transform-origin:0 0;">S</div>
<div style="position:absolute;left:594.20px;top:766.40px;font-size:12.5px;line-height:12.5px;font-weight:700;color:#0A7DC2;white-space:pre;letter-spacing:0.460px;">SANMAR</div>
<div style="position:absolute;left:672.80px;top:766.40px;font-size:12.5px;line-height:12.5px;font-weight:700;color:#03A9F4;white-space:pre;letter-spacing:0.405px;">VIEW RELATED</div>
<div style="position:absolute;left:1314.10px;top:749.10px;font-size:17.5px;line-height:17.5px;font-weight:400;color:#333333;white-space:pre;transform:scaleX(0.9900);transform-origin:0 0;">0</div>
<div style="position:absolute;left:1455.00px;top:749.10px;font-size:17.5px;line-height:17.5px;font-weight:400;color:#009688;white-space:pre;transform:scaleX(0.8750);transform-origin:0 0;">5</div>
<div style="position:absolute;left:1593.70px;top:749.10px;font-size:17.5px;line-height:17.5px;font-weight:400;color:#333333;white-space:pre;transform:scaleX(1.0300);transform-origin:0 0;">5</div>
<div style="position:absolute;left:1751.00px;top:749.10px;font-size:17.5px;line-height:17.5px;font-weight:400;color:#333333;white-space:pre;">0</div>
<div style="position:absolute;left:384.50px;top:814.10px;font-size:17.5px;line-height:17.5px;font-weight:400;color:#333333;white-space:pre;transform:scaleX(0.9824);transform-origin:0 0;">Seattle Location</div>
<div style="position:absolute;left:594.50px;top:805.10px;font-size:17.5px;line-height:17.5px;font-weight:700;color:#2b2b2b;white-space:pre;transform:scaleX(0.8984);transform-origin:0 0;">District</div>
<div style="position:absolute;left:660.40px;top:805.10px;font-size:17.5px;line-height:17.5px;font-weight:700;color:#2b2b2b;white-space:pre;transform:scaleX(0.9754);transform-origin:0 0;">DM130</div>
<div style="position:absolute;left:725.61px;top:805.10px;font-size:17.5px;line-height:17.5px;font-weight:400;color:#333333;white-space:pre;transform:scaleX(0.9917);transform-origin:0 0;">Perfect Tri ® Tee.</div>
<div style="position:absolute;left:903.50px;top:805.90px;font-size:14.5px;line-height:14.5px;font-weight:700;color:#1e1e1e;white-space:pre;letter-spacing:1.400px;transform:scaleX(0.8591);transform-origin:0 0;">CHARCOAL</div>
<div style="position:absolute;left:1026.40px;top:804.80px;font-size:14.5px;line-height:14.5px;font-weight:700;color:#1e1e1e;white-space:pre;transform:scaleX(0.9167);transform-origin:0 0;">M</div>
<div style="position:absolute;left:594.20px;top:831.40px;font-size:12.5px;line-height:12.5px;font-weight:700;color:#0A7DC2;white-space:pre;letter-spacing:0.460px;">SANMAR</div>
<div style="position:absolute;left:672.80px;top:831.40px;font-size:12.5px;line-height:12.5px;font-weight:700;color:#03A9F4;white-space:pre;letter-spacing:0.405px;">VIEW RELATED</div>
<div style="position:absolute;left:1314.10px;top:814.10px;font-size:17.5px;line-height:17.5px;font-weight:400;color:#333333;white-space:pre;transform:scaleX(0.9900);transform-origin:0 0;">0</div>
<div style="position:absolute;left:1454.50px;top:814.10px;font-size:17.5px;line-height:17.5px;font-weight:400;color:#009688;white-space:pre;transform:scaleX(0.9800);transform-origin:0 0;">4</div>
<div style="position:absolute;left:1593.70px;top:814.10px;font-size:17.5px;line-height:17.5px;font-weight:400;color:#333333;white-space:pre;transform:scaleX(1.0300);transform-origin:0 0;">4</div>
<div style="position:absolute;left:1751.00px;top:814.10px;font-size:17.5px;line-height:17.5px;font-weight:400;color:#333333;white-space:pre;">0</div>
<div style="position:absolute;left:384.50px;top:879.10px;font-size:17.5px;line-height:17.5px;font-weight:400;color:#333333;white-space:pre;transform:scaleX(0.9824);transform-origin:0 0;">Seattle Location</div>
<div style="position:absolute;left:594.50px;top:870.10px;font-size:17.5px;line-height:17.5px;font-weight:700;color:#2b2b2b;white-space:pre;transform:scaleX(0.8984);transform-origin:0 0;">District</div>
<div style="position:absolute;left:660.40px;top:870.10px;font-size:17.5px;line-height:17.5px;font-weight:700;color:#2b2b2b;white-space:pre;transform:scaleX(0.9754);transform-origin:0 0;">DM130</div>
<div style="position:absolute;left:725.61px;top:870.10px;font-size:17.5px;line-height:17.5px;font-weight:400;color:#333333;white-space:pre;transform:scaleX(0.9917);transform-origin:0 0;">Perfect Tri ® Tee.</div>
<div style="position:absolute;left:903.50px;top:870.90px;font-size:14.5px;line-height:14.5px;font-weight:700;color:#1e1e1e;white-space:pre;letter-spacing:1.400px;transform:scaleX(0.8591);transform-origin:0 0;">CHARCOAL</div>
<div style="position:absolute;left:1025.80px;top:869.80px;font-size:14.5px;line-height:14.5px;font-weight:700;color:#1e1e1e;white-space:pre;transform:scaleX(0.8889);transform-origin:0 0;">L</div>
<div style="position:absolute;left:594.20px;top:896.40px;font-size:12.5px;line-height:12.5px;font-weight:700;color:#0A7DC2;white-space:pre;letter-spacing:0.460px;">SANMAR</div>
<div style="position:absolute;left:672.80px;top:896.40px;font-size:12.5px;line-height:12.5px;font-weight:700;color:#03A9F4;white-space:pre;letter-spacing:0.405px;">VIEW RELATED</div>
<div style="position:absolute;left:1314.10px;top:879.10px;font-size:17.5px;line-height:17.5px;font-weight:400;color:#333333;white-space:pre;transform:scaleX(0.9900);transform-origin:0 0;">0</div>
<div style="position:absolute;left:1444.88px;top:879.10px;font-size:17.5px;line-height:17.5px;font-weight:400;color:#009688;white-space:pre;transform:scaleX(0.9211);transform-origin:0 0;">10</div>
<div style="position:absolute;left:1583.58px;top:879.10px;font-size:17.5px;line-height:17.5px;font-weight:400;color:#333333;white-space:pre;transform:scaleX(1.0211);transform-origin:0 0;">10</div>
<div style="position:absolute;left:1751.00px;top:879.10px;font-size:17.5px;line-height:17.5px;font-weight:400;color:#333333;white-space:pre;">0</div>
<div style="position:absolute;left:384.50px;top:944.10px;font-size:17.5px;line-height:17.5px;font-weight:400;color:#333333;white-space:pre;transform:scaleX(0.9824);transform-origin:0 0;">Seattle Location</div>
<div style="position:absolute;left:594.50px;top:935.10px;font-size:17.5px;line-height:17.5px;font-weight:700;color:#2b2b2b;white-space:pre;transform:scaleX(0.8984);transform-origin:0 0;">District</div>
<div style="position:absolute;left:660.40px;top:935.10px;font-size:17.5px;line-height:17.5px;font-weight:700;color:#2b2b2b;white-space:pre;transform:scaleX(0.9754);transform-origin:0 0;">DM130</div>
<div style="position:absolute;left:725.61px;top:935.10px;font-size:17.5px;line-height:17.5px;font-weight:400;color:#333333;white-space:pre;transform:scaleX(0.9917);transform-origin:0 0;">Perfect Tri ® Tee.</div>
<div style="position:absolute;left:903.50px;top:935.90px;font-size:14.5px;line-height:14.5px;font-weight:700;color:#1e1e1e;white-space:pre;letter-spacing:1.400px;transform:scaleX(0.8591);transform-origin:0 0;">CHARCOAL</div>
<div style="position:absolute;left:1025.65px;top:934.80px;font-size:14.5px;line-height:14.5px;font-weight:700;color:#1e1e1e;white-space:pre;transform:scaleX(0.9211);transform-origin:0 0;">XL</div>
<div style="position:absolute;left:594.20px;top:961.40px;font-size:12.5px;line-height:12.5px;font-weight:700;color:#0A7DC2;white-space:pre;letter-spacing:0.460px;">SANMAR</div>
<div style="position:absolute;left:672.80px;top:961.40px;font-size:12.5px;line-height:12.5px;font-weight:700;color:#03A9F4;white-space:pre;letter-spacing:0.405px;">VIEW RELATED</div>
<div style="position:absolute;left:1314.10px;top:944.10px;font-size:17.5px;line-height:17.5px;font-weight:400;color:#333333;white-space:pre;transform:scaleX(0.9900);transform-origin:0 0;">0</div>
<div style="position:absolute;left:1444.88px;top:944.10px;font-size:17.5px;line-height:17.5px;font-weight:400;color:#009688;white-space:pre;transform:scaleX(0.9211);transform-origin:0 0;">10</div>
<div style="position:absolute;left:1583.58px;top:944.10px;font-size:17.5px;line-height:17.5px;font-weight:400;color:#333333;white-space:pre;transform:scaleX(1.0211);transform-origin:0 0;">10</div>
<div style="position:absolute;left:1751.00px;top:944.10px;font-size:17.5px;line-height:17.5px;font-weight:400;color:#333333;white-space:pre;">0</div>
</div>
</body></html>
